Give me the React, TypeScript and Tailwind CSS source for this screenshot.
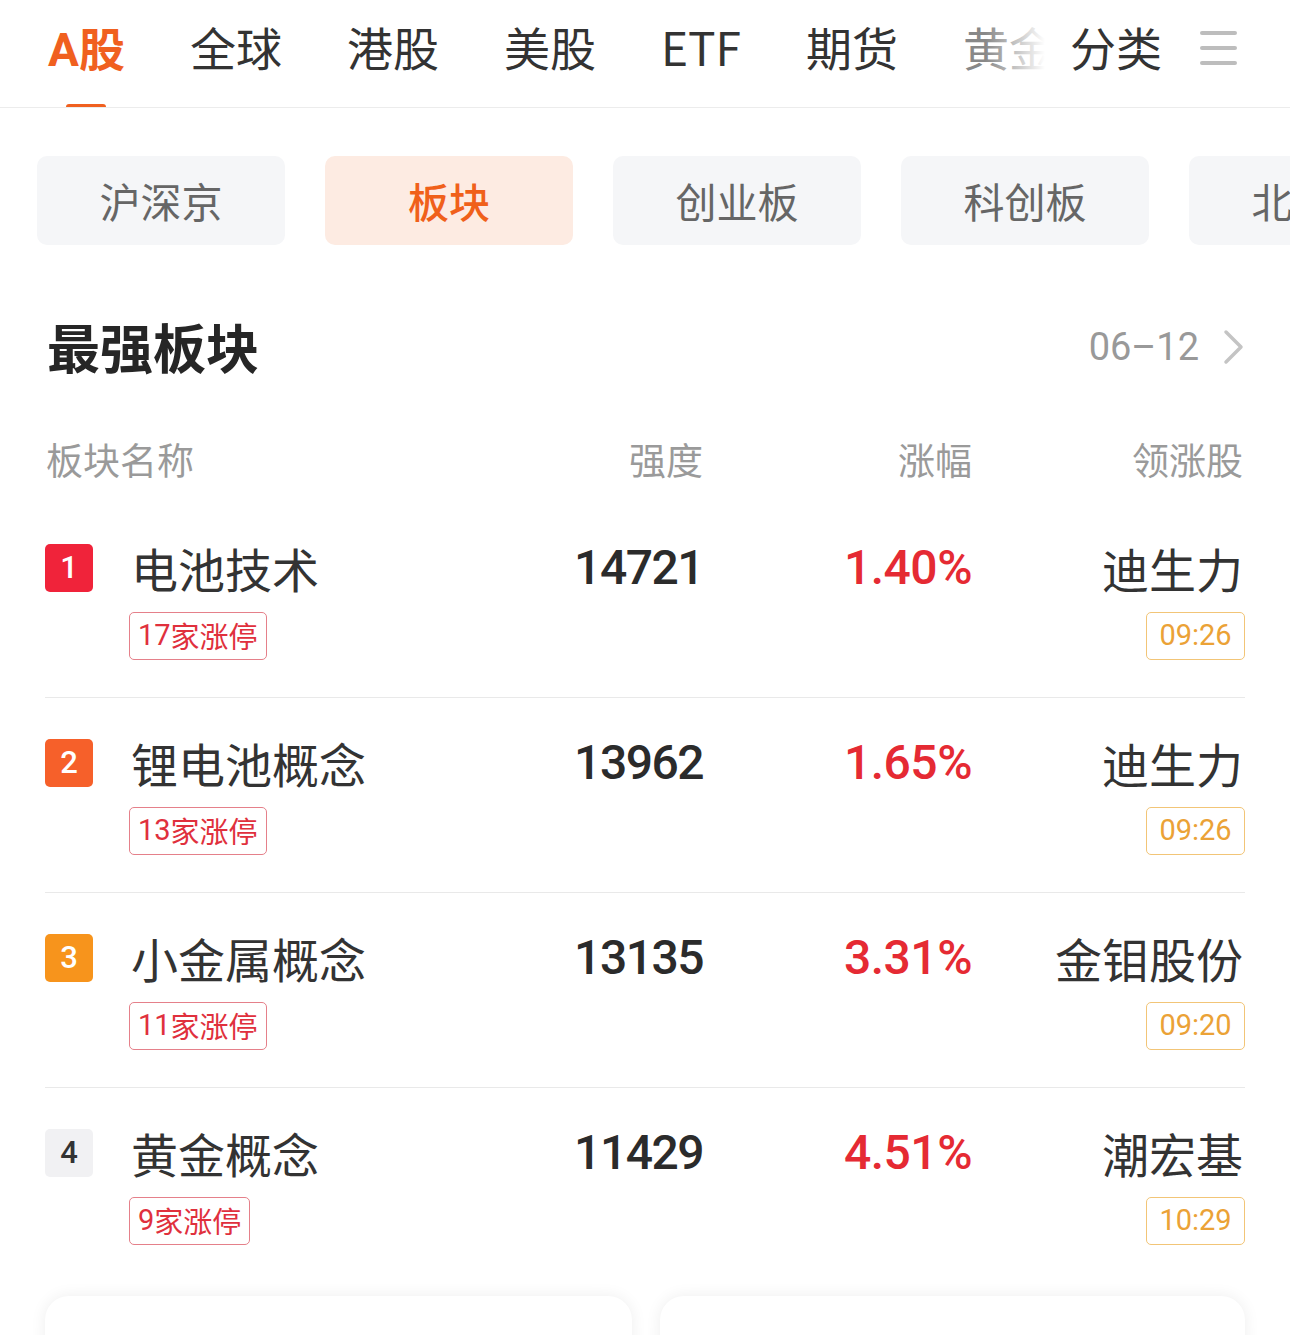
import React from "react";

const cjk = { fontFamily: '"Noto Sans CJK SC", "Noto Sans", sans-serif' };
const num = { fontFamily: 'Roboto, "Noto Sans CJK SC", sans-serif' };

const rows = [
  { rank: 1, badge: "bg-[#f0233a] text-white", name: "电池技术", tag: "17家涨停", score: "14721", pct: "1.40%", stock: "迪生力", time: "09:26", divider: true },
  { rank: 2, badge: "bg-[#f6602a] text-white", name: "锂电池概念", tag: "13家涨停", score: "13962", pct: "1.65%", stock: "迪生力", time: "09:26", divider: true },
  { rank: 3, badge: "bg-[#f7941c] text-white", name: "小金属概念", tag: "11家涨停", score: "13135", pct: "3.31%", stock: "金钼股份", time: "09:20", divider: true },
  { rank: 4, badge: "bg-[#f1f1f3] text-[#333]", name: "黄金概念", tag: "9家涨停", score: "11429", pct: "4.51%", stock: "潮宏基", time: "10:29", divider: false },
];

export default function App() {
  const tabs = ["全球", "港股", "美股"];
  return (
    <div className="w-[1290px] h-[1335px] overflow-hidden bg-white text-[#333]" style={cjk}>
      {/* top nav */}
      <div className="flex h-[108px] border-b border-[#ececec]">
        <div className="relative w-[1045px] overflow-hidden">
          <div className="flex items-start gap-[65px] pl-[48px] pt-[18px] whitespace-nowrap">
            <div className="relative flex flex-col items-center">
              <span className="text-[46px] leading-[56px] font-bold text-[#f0601f]">
                <span style={num}>A</span>股
              </span>
              <span className="mt-[26px] w-[40px] h-[6px] rounded-full bg-[#f0601f]" />
            </div>
            {tabs.map((t) => (
              <span key={t} className="text-[46px] leading-[56px] text-[#333]">{t}</span>
            ))}
            <span className="text-[46px] leading-[56px] text-[#333]">ETF</span>
            <span className="text-[46px] leading-[56px] text-[#333]">期货</span>
            <span className="text-[46px] leading-[56px] text-[#888]">黄金</span>
          </div>
          <div className="absolute top-0 right-0 h-full w-[60px] bg-gradient-to-r from-white/0 to-white" />
        </div>
        <div className="flex items-start pt-[18px] ml-[25px] gap-[38px]">
          <span className="text-[46px] leading-[56px] text-[#333]">分类</span>
          <div className="flex flex-col gap-[11px] pt-[13px]">
            <span className="block w-[37px] h-[4px] rounded-full bg-[#bdbdbd]" />
            <span className="block w-[37px] h-[4px] rounded-full bg-[#bdbdbd]" />
            <span className="block w-[37px] h-[4px] rounded-full bg-[#bdbdbd]" />
          </div>
        </div>
      </div>

      {/* chips */}
      <div className="flex gap-[40px] pl-[37px] mt-[48px] overflow-hidden whitespace-nowrap">
        {["沪深京", "板块", "创业板", "科创板", "北交所"].map((c, i) => (
          <div
            key={c}
            className={
              "shrink-0 w-[248px] h-[89px] rounded-[10px] flex items-center justify-center text-[41px] " +
              (i === 1 ? "bg-[#fdebe2] text-[#f0601a] font-medium" : "bg-[#f5f6f8] text-[#666]")
            }
          >
            {c}
          </div>
        ))}
      </div>

      {/* title */}
      <div className="flex items-center justify-between h-[80px] mt-[62px] pl-[47px] pr-[45px]">
        <span className="text-[53px] font-bold text-[#262626]">最强板块</span>
        <div className="flex items-center gap-[24px]">
          <span className="text-[38px] text-[#999]" style={num}>06–12</span>
          <svg width="22" height="36" viewBox="0 0 22 36" fill="none">
            <path d="M3 3 L18 18 L3 33" stroke="#c4c4c4" strokeWidth="3.5" strokeLinecap="round" strokeLinejoin="round" />
          </svg>
        </div>
      </div>

      {/* header */}
      <div className="mx-[45px] flex items-center h-[86px] mt-[30px] text-[37px] text-[#9a9a9a]">
        <div className="flex-1 pl-[1px]">板块名称</div>
        <div className="w-[200px] text-right">强度</div>
        <div className="w-[269px] text-right">涨幅</div>
        <div className="w-[273px] text-right pr-[2px]">领涨股</div>
      </div>

      {/* rows */}
      <div className="mx-[45px]">
        {rows.map((r) => (
          <div key={r.rank} className={"h-[195px] pt-[41px] " + (r.divider ? "border-b border-[#e9e9e9]" : "")}>
            <div className="flex items-center h-[48px]">
              <div className="flex-1 flex items-center">
                <span
                  className={"w-[48px] h-[48px] rounded-[5px] flex items-center justify-center text-[31px] font-medium " + r.badge}
                  style={num}
                >
                  {r.rank}
                </span>
                <span className="ml-[38px] text-[47px] text-[#333] whitespace-nowrap">{r.name}</span>
              </div>
              <div className="w-[200px] text-right text-[48px] font-medium text-[#2b2b2b] tracking-[-1.5px]" style={num}>
                {r.score}
              </div>
              <div className="w-[269px] text-right text-[48px] font-medium text-[#e52a33] tracking-[-0.5px]" style={num}>
                {r.pct}
              </div>
              <div className="w-[273px] text-right text-[47px] text-[#333] whitespace-nowrap pr-[2px]">{r.stock}</div>
            </div>
            <div className="flex items-center justify-between mt-[20px]">
              <span className="ml-[84px] h-[48px] px-[8px] flex items-center border border-[#e5808a] rounded-[5px] text-[29px] text-[#e0303d] whitespace-nowrap">
                <span style={num}>{r.tag.replace(/家涨停/, "")}</span>家涨停
              </span>
              <span className="h-[48px] w-[99px] flex items-center justify-center border border-[#f2c577] rounded-[5px] text-[29px] text-[#eba236]" style={num}>
                {r.time}
              </span>
            </div>
          </div>
        ))}
      </div>

      {/* bottom cards */}
      <div className="flex gap-[28px] mx-[45px] mt-[13px]">
        <div className="w-[587px] h-[120px] rounded-[24px] bg-white shadow-[0_0_16px_rgba(0,0,0,0.07)]" />
        <div className="w-[585px] h-[120px] rounded-[24px] bg-white shadow-[0_0_16px_rgba(0,0,0,0.07)]" />
      </div>
    </div>
  );
}
